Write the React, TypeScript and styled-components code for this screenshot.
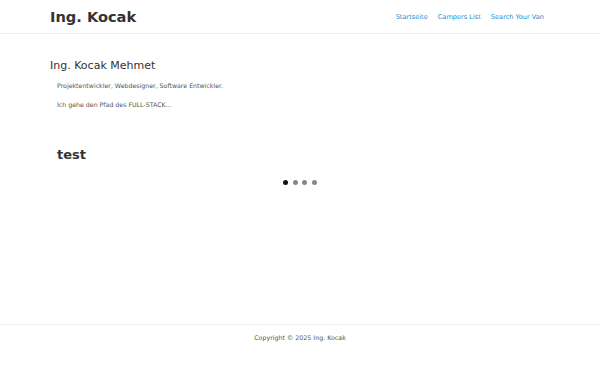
import React from 'react';
import styled, { createGlobalStyle } from 'styled-components';

const GlobalStyle = createGlobalStyle`
    html, body {
        margin: 0;
        padding: 0;
        background: #fff;
        font-family: "DejaVu Sans", sans-serif;
        color: #333;
    }
`;

const Page = styled.div`
    min-height: 375px;
    display: flex;
    flex-direction: column;
`;

const Navbar = styled.header`
    height: 33px;
    border-bottom: 1px solid #eee;
    display: flex;
    align-items: center;
    justify-content: space-between;
    padding: 0 50px;
`;

const Brand = styled.a`
    font-weight: bold;
    font-size: 14.6px;
    color: #333;
    text-decoration: none;
`;

const NavList = styled.nav`
    display: flex;
    gap: 10px;
    padding-right: 6px;
`;

const NavLink = styled.a`
    font-size: 6.6px;
    color: #2a8ad0;
    text-decoration: none;
`;

const Main = styled.main`
    flex: 1;
    padding: 25px 50px 0;
`;

const Title = styled.h1`
    margin: 0 0 10px;
    font-size: 11px;
    font-weight: normal;
    color: #333;
`;

const Text = styled.p`
    margin: 0 0 12px 7px;
    font-size: 6.25px;
    color: #555;
`;

const SlideTitle = styled.h2`
    margin: 39px 0 18px 7px;
    font-size: 13px;
    font-weight: bold;
    color: #333;
`;

const Dots = styled.div`
    display: flex;
    justify-content: center;
    gap: 4.5px;
`;

const Dot = styled.span<{ active?: boolean }>`
    width: 5px;
    height: 5px;
    border-radius: 50%;
    background: ${(props) => (props.active ? '#111' : '#888')};
`;

const Footer = styled.footer`
    border-top: 1px solid #eee;
    height: 51px;
    padding-top: 9px;
    box-sizing: border-box;
    text-align: center;
    font-size: 6.3px;
    color: #555;
`;

const App = () => {
    return (
        <Page>
            <GlobalStyle />
            <Navbar>
                <Brand href="#">Ing. Kocak</Brand>
                <NavList>
                    <NavLink href="#">Startseite</NavLink>
                    <NavLink href="#">Campers List</NavLink>
                    <NavLink href="#">Search Your Van</NavLink>
                </NavList>
            </Navbar>
            <Main>
                <Title>Ing. Kocak Mehmet</Title>
                <Text>Projektentwickler, Webdesigner, Software Entwickler.</Text>
                <Text>Ich gehe den Pfad des FULL-STACK...</Text>
                <SlideTitle>test</SlideTitle>
                <Dots>
                    {[0, 1, 2, 3].map((i) => (
                        <Dot key={i} active={i === 0} />
                    ))}
                </Dots>
            </Main>
            <Footer>Copyright © 2025 Ing. Kocak</Footer>
        </Page>
    );
};

export default App;
